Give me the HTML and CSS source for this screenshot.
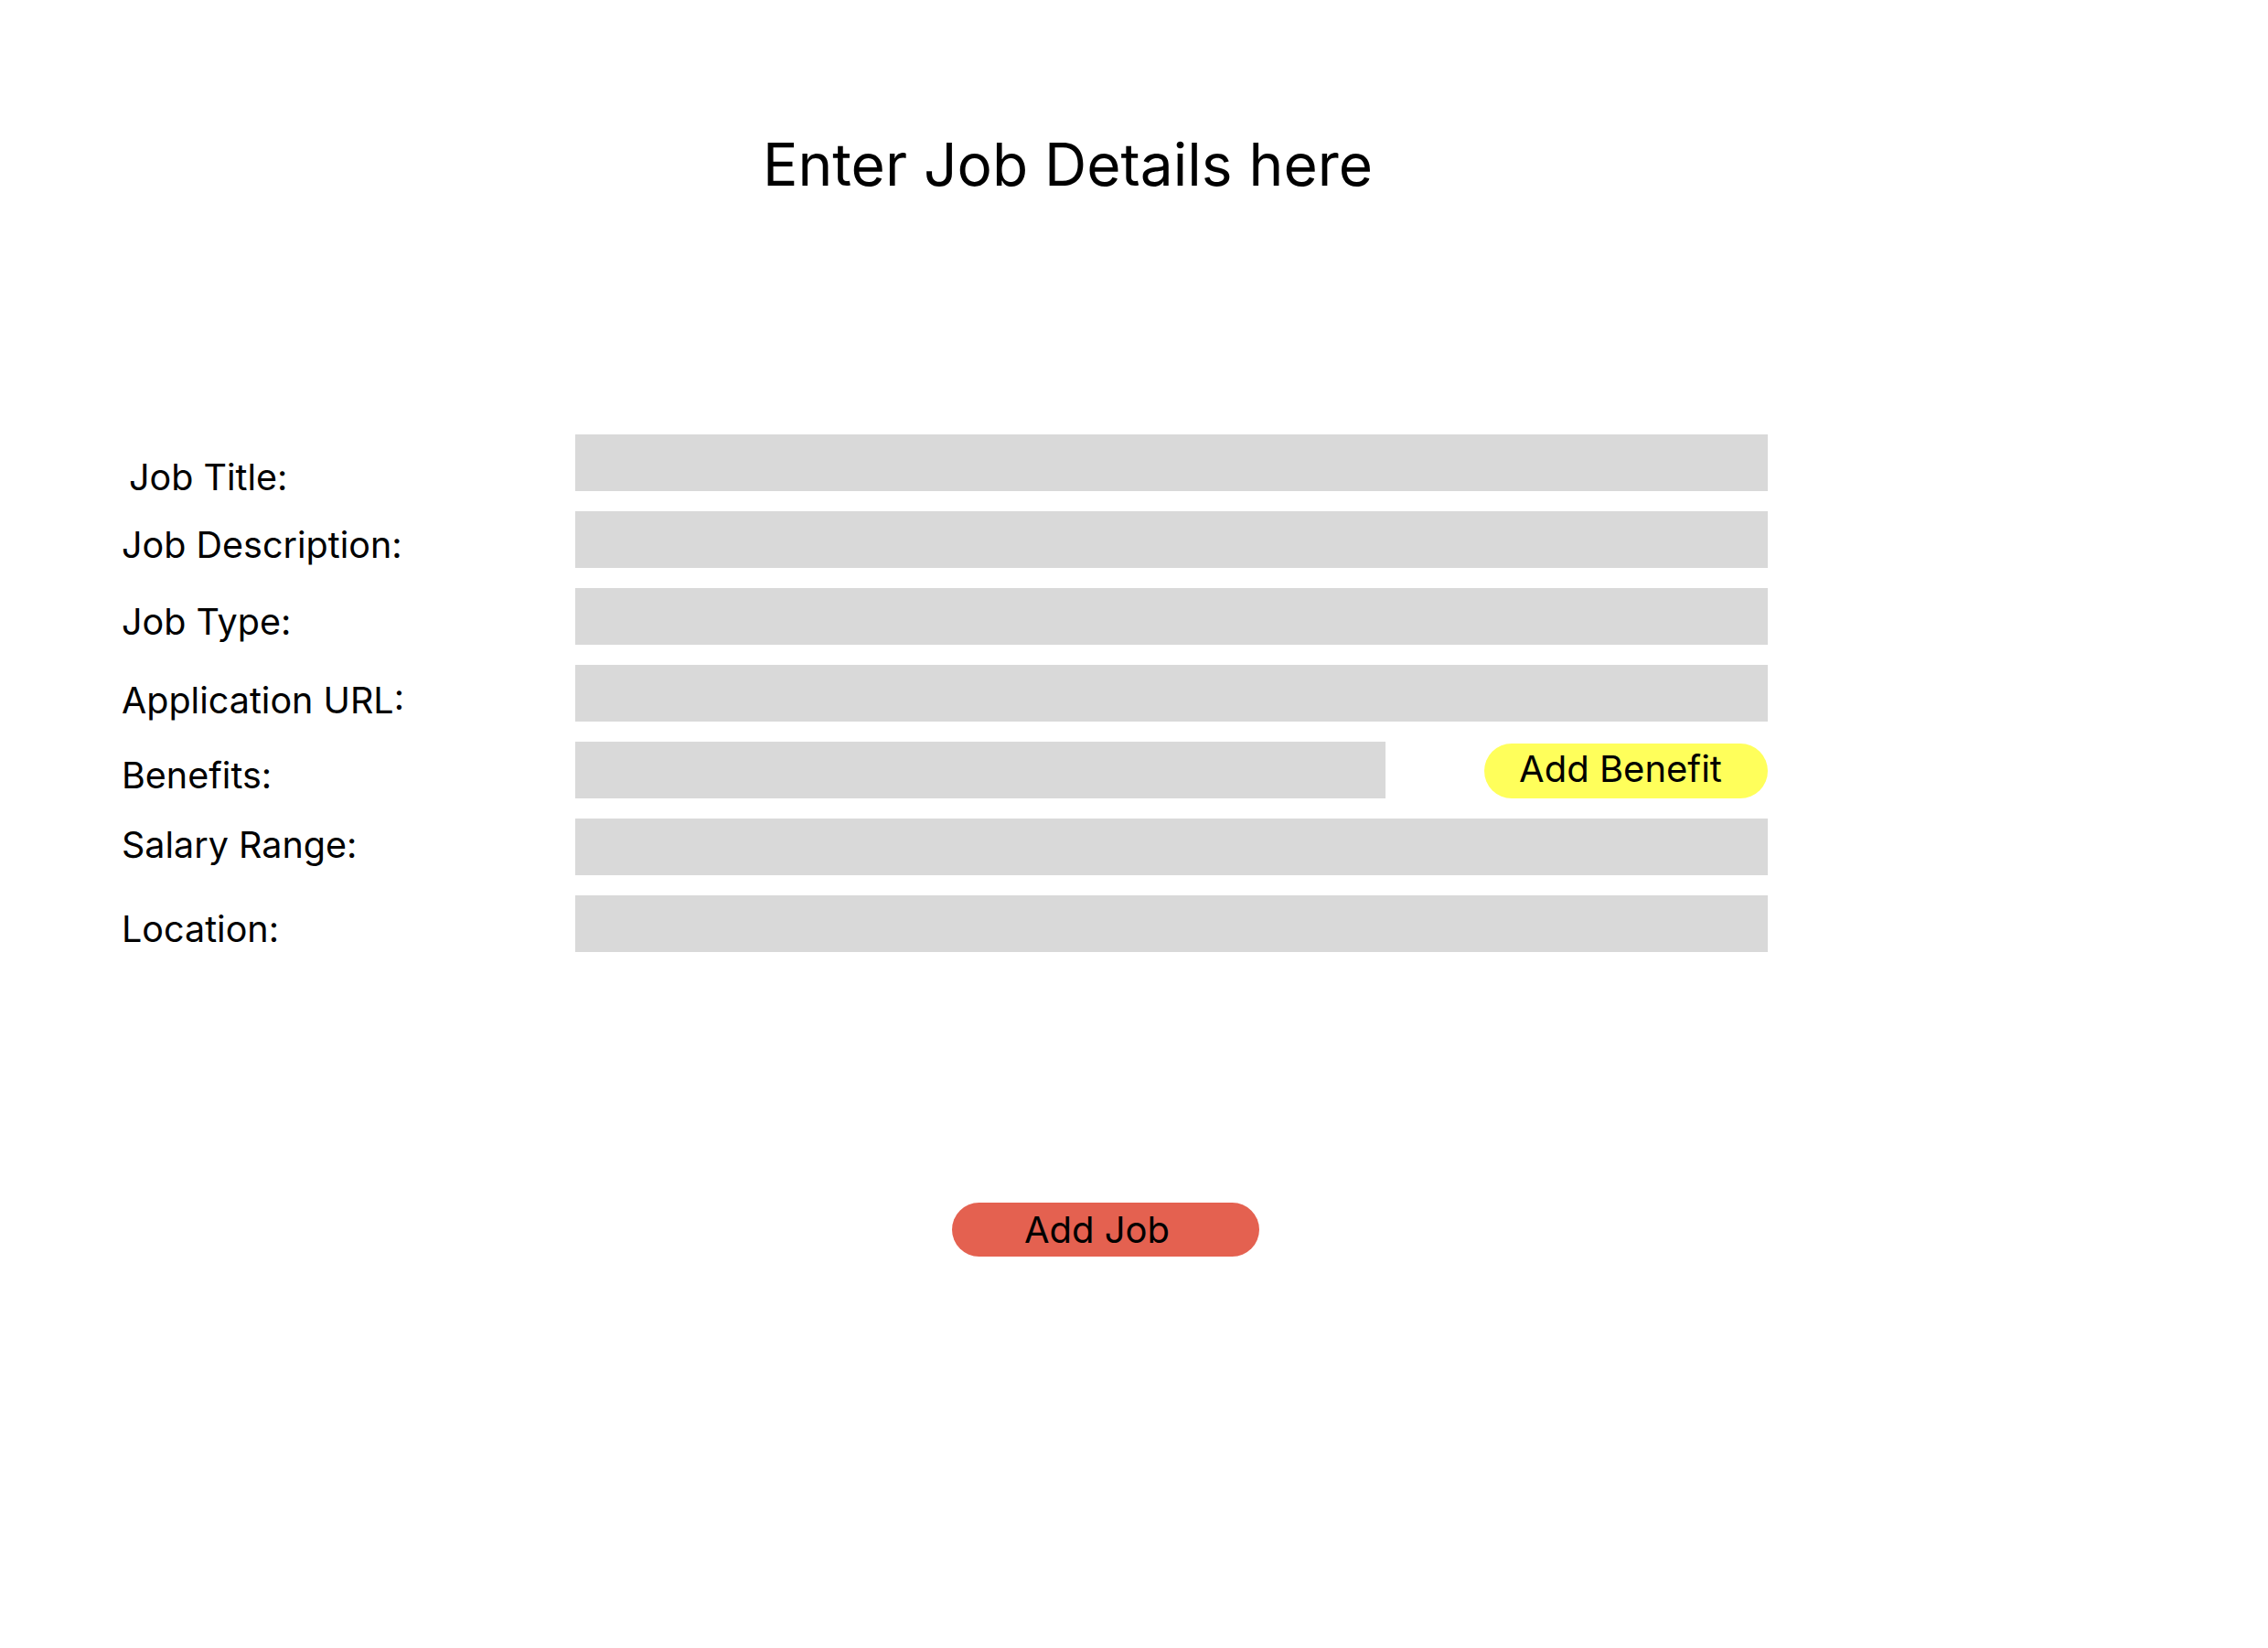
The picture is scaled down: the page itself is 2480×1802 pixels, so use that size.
FILE: index.html
```html
<!DOCTYPE html>
<html lang="en">
<head>
<meta charset="utf-8">
<title>Enter Job Details</title>
<link rel="stylesheet" href="styles.css">
</head>
<body>
<main class="page">
  <h1 class="title">Enter Job Details here</h1>
  <form class="form">
    <div class="row">
      <label class="label label--title">Job Title:</label>
      <div class="field"></div>
    </div>
    <div class="row">
      <label class="label">Job Description:</label>
      <div class="field"></div>
    </div>
    <div class="row">
      <label class="label">Job Type:</label>
      <div class="field"></div>
    </div>
    <div class="row">
      <label class="label label--low">Application URL:</label>
      <div class="field"></div>
    </div>
    <div class="row">
      <label class="label">Benefits:</label>
      <div class="field field--short"></div>
      <button type="button" class="btn btn--benefit">Add Benefit</button>
    </div>
    <div class="row">
      <label class="label label--high">Salary Range:</label>
      <div class="field"></div>
    </div>
    <div class="row">
      <label class="label">Location:</label>
      <div class="field"></div>
    </div>
    <div class="actions">
      <button type="button" class="btn btn--job">Add Job</button>
    </div>
  </form>
</main>
</body>
</html>
```
FILE: styles.css
```css
html, body {
  margin: 0;
  padding: 0;
  background: #ffffff;
}

body {
  font-family: "Inter", "Liberation Sans", sans-serif;
  color: #000000;
  width: 2480px;
  height: 1802px;
  overflow: hidden;
}

.page {
  display: flex;
  flex-direction: column;
}

.title {
  margin: 141px 0 0 834px;
  font-size: 64px;
  line-height: 77px;
  font-weight: 400;
}

.form {
  display: flex;
  flex-direction: column;
  gap: 22px;
  margin-top: 257px;
  padding-left: 133px;
}

.row {
  display: flex;
  align-items: flex-start;
  height: 62px;
}

.label {
  width: 496px;
  flex: none;
  font-size: 39.5px;
  line-height: 48px;
  margin-top: 13px;
}

.label--title {
  margin-top: 23px;
  padding-left: 8px;
  width: 488px;
}

.label--low {
  margin-top: 15px;
}

.label--high {
  margin-top: 5px;
}

.field {
  width: 1304px;
  height: 62px;
  background: #d9d9d9;
  flex: none;
}

.field--short {
  width: 886px;
}

.btn {
  border: none;
  font-family: "Inter", "Liberation Sans", sans-serif;
  color: #000000;
  font-size: 40px;
  font-weight: 400;
  border-radius: 40px;
  padding: 0;
  cursor: pointer;
  text-align: center;
}

.btn--benefit {
  margin-left: 108px;
  margin-top: 2px;
  width: 310px;
  height: 60px;
  line-height: 55px;
  padding-bottom: 5px;
  padding-right: 12px;
  background: #ffff5b;
}

.actions {
  display: flex;
  margin-top: 252px;
  padding-left: 908px;
}

.btn--job {
  width: 336px;
  height: 59px;
  line-height: 59px;
  padding-right: 19px;
  background: #e46150;
}
```
